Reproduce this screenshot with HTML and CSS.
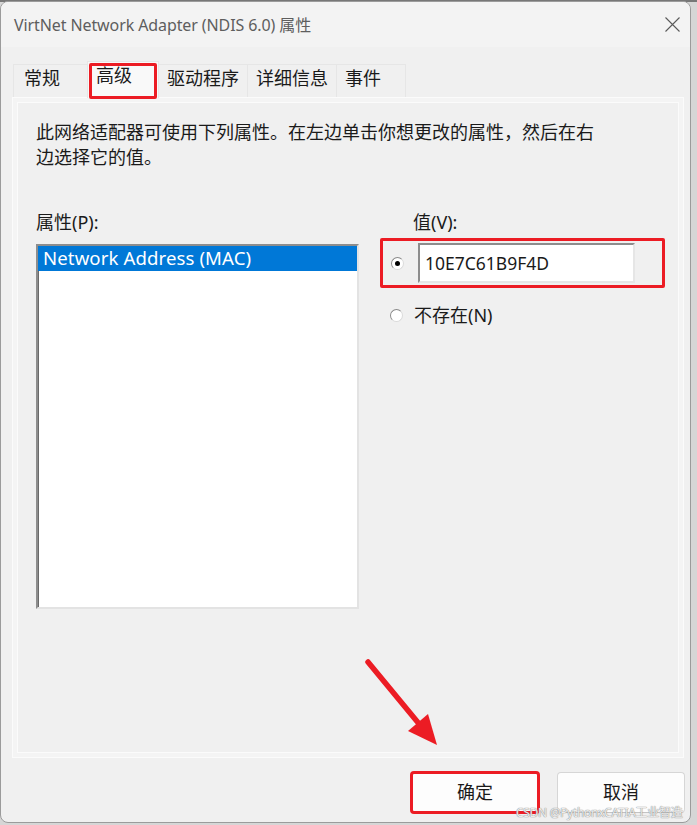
FILE: index.html
```html
<!DOCTYPE html>
<html lang="zh-CN">
<head>
  <meta charset="UTF-8">
  <title>VirtNet Network Adapter (NDIS 6.0) 属性</title>
  <link rel="stylesheet" href="styles.css">
</head>
<body>
<div class="window">
  <div class="titlebar">
    <span class="title">VirtNet Network Adapter (NDIS 6.0) 属性</span>
    <svg class="close" width="15" height="15" viewBox="0 0 15 15">
      <path d="M0.5 0.5 L14.5 14.5 M14.5 0.5 L0.5 14.5" stroke="#5a5a5a" stroke-width="1.1" fill="none"/>
    </svg>
  </div>

  <div class="tabs">
    <span class="tab first">常规</span>
    <span class="tab active">高级</span>
    <span class="tab">驱动程序</span>
    <span class="tab">详细信息</span>
    <span class="tab">事件</span>
  </div>

  <div class="panel">
    <p class="desc">此网络适配器可使用下列属性。在左边单击你想更改的属性，然后在右<br>边选择它的值。</p>

    <div class="cols">
      <div class="col-left">
        <div class="label">属性(P):</div>
        <div class="listbox">
          <div class="item selected">Network Address (MAC)</div>
        </div>
      </div>

      <div class="col-right">
        <div class="label label-value">值(V):</div>
        <div class="value-row">
          <span class="radio checked"></span>
          <div class="textbox">10E7C61B9F4D</div>
        </div>
        <div class="radio-row">
          <span class="radio"></span>
          <span>不存在(N)</span>
        </div>
      </div>
    </div>
  </div>

  <div class="buttons">
    <button class="btn ok">确定</button>
    <button class="btn">取消</button>
  </div>

  <!-- annotation arrow -->
  <svg class="arrow" width="690" height="821" viewBox="0 0 690 821">
    <line x1="368" y1="661" x2="420" y2="724" stroke="#ec1c24" stroke-width="5.5" stroke-linecap="round"/>
    <polygon points="437,744 408,730 428,713" fill="#ec1c24"/>
  </svg>
  <span class="watermark">CSDN @PythonxCATIA工业智造</span>
</div>
</body>
</html>
```

FILE: styles.css
```css
* {
	margin: 0;
	padding: 0;
	box-sizing: border-box;
}

html, body {
	height: 100%;
}

body {
	background: linear-gradient(#777 0 2px, #d6d6d6 2px);
	font: normal 18px "Noto Sans", "Noto Sans CJK SC", sans-serif;
	color: #1a1a1a;
	overflow: hidden;
}

.window {
	position: relative;
	width: 691px;
	height: 822px;
	margin-top: 1px;
	background: #f0f0f0;
	border: 1px solid #9b9b9b;
	border-radius: 8px;
	overflow: hidden;
}

/* title bar */
.titlebar {
	height: 45px;
	display: flex;
	align-items: center;
	justify-content: space-between;
	padding: 0 10px 2px 13px;
	background: #f3f3f3;
}

.title {
	font-size: 16px;
	color: #5e5e5e;
	letter-spacing: -0.1px;
}

.close {
	margin-top: 2px;
}

/* tabs */
.tabs {
	display: flex;
	align-items: flex-end;
	height: 50px;
	padding-left: 13px;
	position: relative;
	z-index: 2;
}

.tab {
	height: 33px;
	min-width: 70px;
	padding: 0 8px;
	line-height: 25px;
	font-size: 18px;
	background: #f0f0f0;
	border: 1px solid #e6e6e6;
	border-bottom: none;
	margin-left: -1px;
	font-family: "Noto Sans CJK SC", sans-serif;
}

.tab.first {
	min-width: 75px;
	padding-left: 10px;
}

.tab.active {
	position: relative;
	height: 37px;
	min-width: 72px;
	margin-bottom: -1px;
	background: #f9f9f9;
}

.tab.active::after {
	content: "";
	position: absolute;
	left: 1px;
	right: 1px;
	top: 1px;
	bottom: -1px;
	border: 3px solid #ec1c24;
	border-radius: 2px;
}

/* panel */
.panel {
	margin-left: 11px;
	width: 672px;
	height: 661px;
	border: 1px solid #fbfbfb;
	box-shadow: inset 0 0 0 4px #f4f4f4, inset 0 0 0 5px #fbfbfb;
	padding: 21px 0 0 23px;
}

.desc {
	line-height: 25px;
	font-family: "Noto Sans CJK SC", sans-serif;
}

.cols {
	display: flex;
	gap: 21px;
	margin-top: 41px;
}

.label {
	line-height: 25px;
	margin-bottom: 9px;
}

.listbox {
	width: 323px;
	height: 365px;
	background: #fff;
	border: 2px solid;
	border-color: #8d8d8d #e3e3e3 #e3e3e3 #8d8d8d;
	box-shadow: inset 1px 1px 0 #6a6a6a;
}

.item {
	height: 25px;
	line-height: 24px;
	padding-left: 5px;
	font-size: 18.6px;
	letter-spacing: 0.1px;
}

.item.selected {
	background: #0078d7;
	color: #fff;
}

/* value column */
.label-value {
	padding-left: 33px;
	margin-bottom: 3px;
}

.value-row {
	width: 285px;
	height: 50px;
	display: flex;
	align-items: center;
	padding-left: 8px;
	border: 3px solid #ec1c24;
	border-radius: 2px;
}

.radio {
	width: 13px;
	height: 13px;
	border-radius: 50%;
	background: #fff;
	border: 1px solid #8a8a8a;
	border-right-color: #dadada;
	border-bottom-color: #dadada;
	flex: none;
	position: relative;
}

.radio.checked::after {
	content: "";
	position: absolute;
	left: 3px;
	top: 3px;
	width: 5px;
	height: 5px;
	border-radius: 50%;
	background: #000;
}

.textbox {
	width: 217px;
	height: 40px;
	margin-left: 14px;
	background: #fff;
	border: 2px solid;
	border-color: #8d8d8d #e6e6e6 #e6e6e6 #8d8d8d;
	padding-left: 5px;
	line-height: 36px;
	font-size: 17.5px;
}

.radio-row {
	display: flex;
	align-items: center;
	gap: 11px;
	margin-top: 15px;
	padding-left: 10px;
	line-height: 25px;
}

/* buttons */
.buttons {
	display: flex;
	justify-content: flex-end;
	gap: 18px;
	padding-right: 5px;
	margin-top: 14px;
}

.btn {
	width: 128px;
	height: 41px;
	background: #fdfdfd;
	border: 1px solid #d6d6d6;
	border-bottom-color: #c4c4c4;
	border-radius: 4px;
	font: normal 18px "Noto Sans CJK SC", sans-serif;
	line-height: 32px;
	padding-bottom: 4px;
	color: #1a1a1a;
}

.btn.ok {
	outline: 3px solid #ec1c24;
	outline-offset: -2px;
	border-radius: 3px;
}

/* annotation overlay */
.arrow {
	position: absolute;
	left: -1px;
	top: -1px;
}

.watermark {
	position: absolute;
	left: 515px;
	top: 801px;
	font: normal 12px "Noto Sans", "Noto Sans CJK SC", sans-serif;
	letter-spacing: -0.3px;
	color: rgba(255, 255, 255, 0.85);
	text-shadow: 0 0 1px #888, 0 0 1px #888;
	white-space: nowrap;
}
```
